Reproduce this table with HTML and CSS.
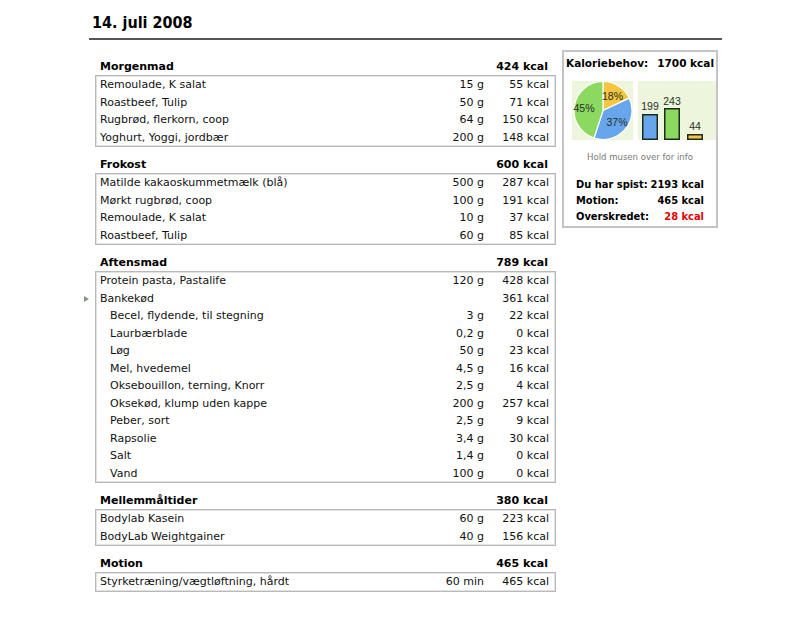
FILE: index.html
```html
<!DOCTYPE html>
<html lang="da">
<head>
<meta charset="utf-8">
<title>14. juli 2008</title>
<link rel="stylesheet" href="styles.css">
</head>
<body>
<div class="page">
  <h1 class="title">14. juli 2008</h1>
  <div class="content">
    <div class="meals">
      <section class="meal">
        <div class="meal-head"><span>Morgenmad</span><span>424 kcal</span></div>
        <div class="meal-box">
          <div class="row"><span>Remoulade, K salat</span><span>15 g</span><span>55 kcal</span></div>
          <div class="row"><span>Roastbeef, Tulip</span><span>50 g</span><span>71 kcal</span></div>
          <div class="row"><span>Rugbrød, flerkorn, coop</span><span>64 g</span><span>150 kcal</span></div>
          <div class="row"><span>Yoghurt, Yoggi, jordbær</span><span>200 g</span><span>148 kcal</span></div>
        </div>
      </section>
      <section class="meal">
        <div class="meal-head"><span>Frokost</span><span>600 kcal</span></div>
        <div class="meal-box">
          <div class="row"><span>Matilde kakaoskummetmælk (blå)</span><span>500 g</span><span>287 kcal</span></div>
          <div class="row"><span>Mørkt rugbrød, coop</span><span>100 g</span><span>191 kcal</span></div>
          <div class="row"><span>Remoulade, K salat</span><span>10 g</span><span>37 kcal</span></div>
          <div class="row"><span>Roastbeef, Tulip</span><span>60 g</span><span>85 kcal</span></div>
        </div>
      </section>
      <section class="meal">
        <div class="meal-head"><span>Aftensmad</span><span>789 kcal</span></div>
        <div class="meal-box">
          <div class="row"><span>Protein pasta, Pastalife</span><span>120 g</span><span>428 kcal</span></div>
          <div class="row"><i class="arrow"></i><span>Bankekød</span><span></span><span>361 kcal</span></div>
          <div class="row sub"><span>Becel, flydende, til stegning</span><span>3 g</span><span>22 kcal</span></div>
          <div class="row sub"><span>Laurbærblade</span><span>0,2 g</span><span>0 kcal</span></div>
          <div class="row sub"><span>Løg</span><span>50 g</span><span>23 kcal</span></div>
          <div class="row sub"><span>Mel, hvedemel</span><span>4,5 g</span><span>16 kcal</span></div>
          <div class="row sub"><span>Oksebouillon, terning, Knorr</span><span>2,5 g</span><span>4 kcal</span></div>
          <div class="row sub"><span>Oksekød, klump uden kappe</span><span>200 g</span><span>257 kcal</span></div>
          <div class="row sub"><span>Peber, sort</span><span>2,5 g</span><span>9 kcal</span></div>
          <div class="row sub"><span>Rapsolie</span><span>3,4 g</span><span>30 kcal</span></div>
          <div class="row sub"><span>Salt</span><span>1,4 g</span><span>0 kcal</span></div>
          <div class="row sub"><span>Vand</span><span>100 g</span><span>0 kcal</span></div>
        </div>
      </section>
      <section class="meal">
        <div class="meal-head"><span>Mellemmåltider</span><span>380 kcal</span></div>
        <div class="meal-box">
          <div class="row"><span>Bodylab Kasein</span><span>60 g</span><span>223 kcal</span></div>
          <div class="row"><span>BodyLab Weightgainer</span><span>40 g</span><span>156 kcal</span></div>
        </div>
      </section>
      <section class="meal">
        <div class="meal-head"><span>Motion</span><span>465 kcal</span></div>
        <div class="meal-box">
          <div class="row"><span>Styrketræning/vægtløftning, hårdt</span><span>60 min</span><span>465 kcal</span></div>
        </div>
      </section>
    </div>

    <aside class="panel">
      <div class="panel-head"><span>Kaloriebehov:</span><span>1700 kcal</span></div>
      <div class="charts">
        <svg class="pie" width="61" height="59" viewBox="0 0 61 59">
          <rect width="61" height="59" fill="#edf5dc"/>
          <path d="M31,29.5 L31,0.5 A29,29 0 0 1 57.24,17.15 Z" fill="#f3c541" stroke="#fff" stroke-width="1.2"/>
          <path d="M31,29.5 L57.24,17.15 A29,29 0 0 1 22.04,57.08 Z" fill="#67a6ec" stroke="#fff" stroke-width="1.2"/>
          <path d="M31,29.5 L22.04,57.08 A29,29 0 0 1 31,0.5 Z" fill="#8cd962" stroke="#fff" stroke-width="1.2"/>
          <text x="40.5" y="18.5" class="lbl">18%</text>
          <text x="45" y="44.5" class="lbl">37%</text>
          <text x="12" y="30.5" class="lbl">45%</text>
        </svg>
        <svg class="bars" width="78" height="59" viewBox="0 0 78 59">
          <rect width="78" height="59" fill="#edf5dc"/>
          <rect x="4.75" y="33.75" width="14.5" height="24.5" fill="#67a6ec" stroke="#1e2a1e" stroke-width="1.5"/>
          <rect x="26.75" y="27.75" width="14.5" height="30.5" fill="#8cd962" stroke="#1e2a1e" stroke-width="1.5"/>
          <rect x="49.75" y="53.75" width="14.5" height="4.5" fill="#f3c541" stroke="#1e2a1e" stroke-width="1.5"/>
          <text x="12" y="29" class="lbl">199</text>
          <text x="34" y="24" class="lbl">243</text>
          <text x="57" y="49" class="lbl">44</text>
        </svg>
      </div>
      <div class="hint">Hold musen over for info</div>
      <div class="summary">
        <div class="sum-row"><span>Du har spist:</span><span>2193 kcal</span></div>
        <div class="sum-row"><span>Motion:</span><span>465 kcal</span></div>
        <div class="sum-row"><span>Overskredet:</span><span class="over">28 kcal</span></div>
      </div>
    </aside>
  </div>
</div>
</body>
</html>
```

FILE: styles.css
```css
html, body {
  margin: 0;
  padding: 0;
  background: #fff;
}

body {
  font-family: "DejaVu Sans", sans-serif;
  font-size: 11px;
  color: #111;
}

.page {
  margin-left: 89px;
  width: 633px;
  padding-top: 12px;
}

.title {
  margin: 0;
  padding: 0 0 4px 3px;
  font-family: "DejaVu Sans Condensed", "DejaVu Sans", sans-serif;
  font-stretch: condensed;
  font-size: 16px;
  line-height: 22px;
  font-weight: bold;
  color: #000;
  border-bottom: 2px solid #555;
}

.content {
  display: flex;
  align-items: flex-start;
  margin-top: 10px;
}

.meals {
  margin-left: 6px;
  width: 461px;
  padding-top: 9px;
}

.meal + .meal {
  margin-top: 10px;
}

.meal-head {
  display: flex;
  justify-content: space-between;
  height: 16px;
  line-height: 16px;
  padding: 0 8px 0 5px;
  font-weight: bold;
  color: #000;
}

.meal-box {
  border: 1px solid #b9b9b9;
  box-shadow: inset 0 0 0 1px #e2e2e2;
  padding: 0 6px 0 4px;
}

.row {
  position: relative;
  display: grid;
  grid-template-columns: 1fr 60px 65px;
  height: 17.5px;
  line-height: 17.5px;
}

.row span:nth-last-child(-n+2) {
  text-align: right;
}

.row.sub > span:first-child {
  padding-left: 10px;
}

.arrow {
  position: absolute;
  left: -16px;
  top: 6px;
  width: 0;
  height: 0;
  border-top: 3px solid transparent;
  border-bottom: 3px solid transparent;
  border-left: 5px solid #7f9a7f;
}

.panel {
  margin-left: 6px;
  width: 152px;
  border: 2px solid #c4c4c4;
  padding-bottom: 1px;
}

.panel-head {
  display: flex;
  justify-content: space-between;
  height: 23px;
  line-height: 23px;
  padding: 0 2px;
  font-size: 10.5px;
  font-weight: bold;
  color: #000;
}

.charts {
  display: flex;
  justify-content: space-between;
  margin: 6px 0 0 8px;
}

.charts svg {
  display: block;
}

.lbl {
  font-family: "Liberation Sans", Arial, sans-serif;
  font-size: 10.5px;
  fill: #26301f;
  text-anchor: middle;
}

.hint {
  margin-top: 10px;
  line-height: 14px;
  text-align: center;
  font-family: "DejaVu Sans Condensed", "DejaVu Sans", sans-serif;
  font-stretch: condensed;
  font-size: 9.5px;
  color: #7a7a7a;
}

.summary {
  margin-top: 13px;
  padding: 0 12px;
  font-family: "DejaVu Sans Condensed", "DejaVu Sans", sans-serif;
  font-stretch: condensed;
}

.sum-row {
  display: flex;
  justify-content: space-between;
  height: 16px;
  line-height: 16px;
  font-weight: bold;
  color: #000;
}

.over {
  color: #e60000;
}
```
